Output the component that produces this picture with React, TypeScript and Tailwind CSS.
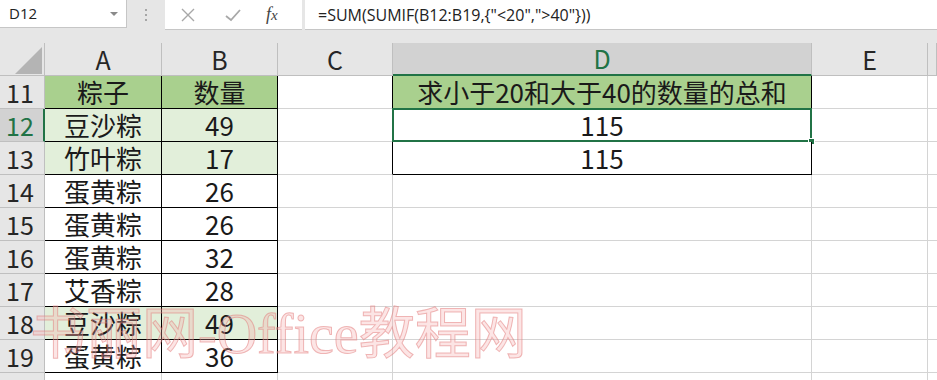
import React from 'react';

const CJK = "font-['Noto_Sans_CJK_SC',sans-serif]";

type Row = { n: number; a: string; b: string; d?: string; fill?: 'head' | 'light' };

const ROWS: Row[] = [
  { n: 11, a: '粽子', b: '数量', d: '求小于20和大于40的数量的总和', fill: 'head' },
  { n: 12, a: '豆沙粽', b: '49', d: '115', fill: 'light' },
  { n: 13, a: '竹叶粽', b: '17', d: '115', fill: 'light' },
  { n: 14, a: '蛋黄粽', b: '26' },
  { n: 15, a: '蛋黄粽', b: '26' },
  { n: 16, a: '蛋黄粽', b: '32' },
  { n: 17, a: '艾香粽', b: '28' },
  { n: 18, a: '豆沙粽', b: '49', fill: 'light' },
  { n: 19, a: '蛋黄粽', b: '36' },
];

function fillClass(f?: 'head' | 'light') {
  if (f === 'head') return 'bg-[#a9d08e]';
  if (f === 'light') return 'bg-[#e2efda]';
  return 'bg-white';
}

function FormulaBar() {
  return (
    <div className="flex h-[43px] items-start bg-[#e6e6e6]">
      <div className="relative flex h-[28px] w-[127px] items-center border-b border-r border-[#c6c6c6] bg-white pl-[9px] font-['Open_Sans',sans-serif] text-[15px] text-[#222]">
        D12
        <span className="absolute right-[8px] top-[12px] h-0 w-0 border-x-[4px] border-t-[4px] border-x-transparent border-t-[#8a8a8a]" />
      </div>
      <div className="flex h-[30px] w-[38px] flex-col items-center justify-center gap-[3px]">
        <span className="h-[2px] w-[2px] bg-[#a6a6a6]" />
        <span className="h-[2px] w-[2px] bg-[#a6a6a6]" />
        <span className="h-[2px] w-[2px] bg-[#a6a6a6]" />
      </div>
      <div className="flex h-[30px] w-[137px] items-center border-b border-[#c6c6c6] bg-white">
        <svg width="14" height="14" viewBox="0 0 14 14" className="ml-[16px]">
          <path d="M1 1 L13 13 M13 1 L1 13" stroke="#a8a8a8" strokeWidth="1.4" fill="none" />
        </svg>
        <svg width="16" height="14" viewBox="0 0 16 14" className="ml-[30px]">
          <path d="M1 8 L6 12 L15 2" stroke="#a8a8a8" strokeWidth="1.8" fill="none" />
        </svg>
        <span className="ml-[25px] font-['Liberation_Serif',serif] text-[18px] italic text-[#444]">
          f<span className="text-[15px]">x</span>
        </span>
      </div>
      <div className="ml-[3px] flex h-[30px] flex-1 items-center border-b border-[#c6c6c6] bg-white pl-[13px] font-['Open_Sans',sans-serif] text-[16px] text-[#222]">
        {'=SUM(SUMIF(B12:B19,{"<20",">40"}))'}
      </div>
    </div>
  );
}

export default function App() {
  const cols = ['A', 'B', 'C', 'D', 'E', ''];
  return (
    <div className={`relative h-[380px] w-[937px] overflow-hidden bg-white ${CJK} text-[#1a1a1a]`}>
      <FormulaBar />
      <div className="grid grid-cols-[45px_117px_116px_115px_419px_116px_1fr] grid-rows-[33px_repeat(9,33px)_1fr] h-[337px]">
        {/* header row */}
        <div className="relative border-b border-r border-[#bfbfbf] bg-[#e6e6e6]">
          <svg width="27" height="27" viewBox="0 0 27 27" className="absolute left-[15px] top-[4px]">
            <path d="M27 0 L27 27 L0 27 Z" fill="#b4b4b4" />
          </svg>
        </div>
        {cols.map((c) =>
          c === 'D' ? (
            <div
              key={c}
              className="flex items-center justify-center border-b-2 border-r border-b-[#217346] border-r-[#bfbfbf] bg-[#d2d2d2] text-[25px] leading-none text-[#217346]"
            >
              {c}
            </div>
          ) : (
            <div
              key={c || 'x'}
              className="flex items-center justify-center border-b border-r border-[#bfbfbf] bg-[#e6e6e6] text-[25px] leading-none text-[#262626]"
            >
              {c}
            </div>
          )
        )}

        {ROWS.map((r) => {
          const sel = r.n === 12;
          const inD = r.n <= 13;
          return (
            <React.Fragment key={r.n}>
              <div
                className={
                  sel
                    ? 'flex items-center border-b border-r-2 border-b-[#bfbfbf] border-r-[#217346] bg-[#d2d2d2] pl-[6px] text-[25px] leading-none text-[#217346]'
                    : 'flex items-center border-b border-r border-[#bfbfbf] bg-[#e6e6e6] pl-[6px] text-[25px] leading-none text-[#262626]'
                }
              >
                {r.n}
              </div>
              <div className={`flex items-end justify-center border-b border-r border-black pb-[1px] text-[26px] leading-[31px] ${fillClass(r.fill)}`}>
                {r.a}
              </div>
              <div className={`flex items-end justify-center border-b border-r border-black pb-[1px] text-[26px] leading-[31px] ${fillClass(r.fill)}`}>
                {r.b}
              </div>
              <div className={`border-b border-r border-[#d4d4d4] ${inD ? 'border-r-black' : ''}`} />
              {inD ? (
                <div
                  className={`relative flex items-end justify-center border-b border-r border-black pb-[1px] text-[26px] leading-[31px] ${fillClass(r.fill === 'head' ? 'head' : undefined)}`}
                >
                  {r.d}
                  {sel && (
                    <>
                      <span className="pointer-events-none absolute -left-[1px] -top-[1px] -right-[1px] -bottom-[1px] border-2 border-[#217346]" />
                      <span className="absolute -bottom-[4px] -right-[4px] h-[7px] w-[7px] border border-white bg-[#217346]" />
                    </>
                  )}
                </div>
              ) : (
                <div className="border-b border-r border-[#d4d4d4]" />
              )}
              <div className="border-b border-r border-[#d4d4d4]" />
              <div className="border-b border-[#d4d4d4]" />
            </React.Fragment>
          );
        })}

        <div className="border-r border-[#bfbfbf] bg-[#e6e6e6]" />
        <div className="border-r border-[#d4d4d4]" />
        <div className="border-r border-[#d4d4d4]" />
        <div className="border-r border-[#d4d4d4]" />
        <div className="border-r border-[#d4d4d4]" />
        <div className="border-r border-[#d4d4d4]" />
        <div />
      </div>

      {/* watermark */}
      <div className="pointer-events-none absolute left-[30px] top-[306px] whitespace-nowrap font-['Liberation_Serif','Noto_Sans_CJK_SC',serif] text-[56px] leading-none text-[rgba(245,170,170,0.3)] [-webkit-text-stroke:1px_rgba(226,120,120,0.5)]">
        书丽网-Office教程网
      </div>
    </div>
  );
}
